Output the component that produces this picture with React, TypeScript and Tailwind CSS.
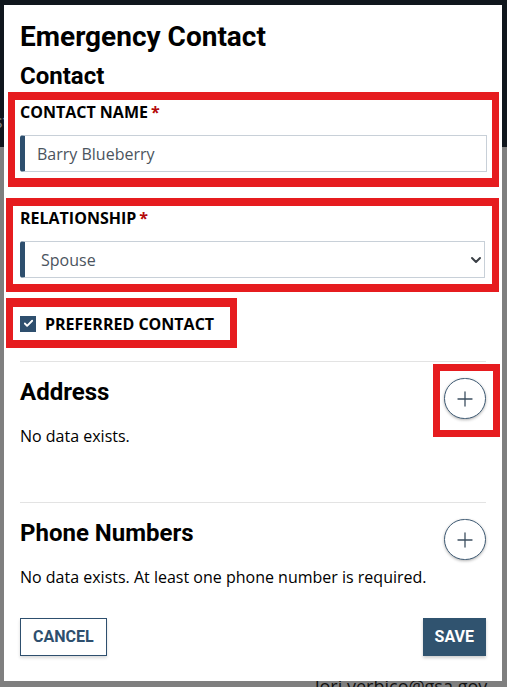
import { Check, ChevronDown, Plus } from 'lucide-react';

const heading = { fontFamily: 'Roboto, "Liberation Sans", sans-serif' };
const body = { fontFamily: '"Open Sans", "Liberation Sans", sans-serif' };

function Section({ title, text, marked, minH }: { title: string; text: string; marked?: boolean; minH: string }) {
  return (
    <div className={`border-t border-[#e3e3e3] ${minH}`}>
      <div className="flex items-start justify-between pt-[16px]">
        <h3 className="text-[24px] font-bold leading-[1.2] text-black" style={heading}>
          {title}
        </h3>
        <div className="relative">
          <button className="w-[42px] h-[41px] rounded-full border border-[#3f5b74] bg-white shadow-[0_1px_3px_rgba(0,0,0,0.3)] flex items-center justify-center text-[#3d4f60]">
            <Plus size={24} strokeWidth={1.3} />
          </button>
          {marked && (
            <div className="absolute -left-[11px] -top-[14px] w-[67px] h-[73px] border-[7px] border-[#e61c1f]" />
          )}
        </div>
      </div>
      <p className="text-[16px] text-black leading-[1.5] mt-[5px]" style={body}>
        {text}
      </p>
    </div>
  );
}

export default function App() {
  return (
    <div className="relative w-[507px] h-[687px] overflow-hidden bg-[#7f7f7f]">
      <div className="h-[147px] bg-[#10161d] pt-[108px] text-[18px] text-[#7b8086]" style={body}>
        <span className="-ml-[6px]">st</span>
      </div>
      <div className="pl-[315px] pt-[526px] text-[18px] text-[#111]" style={body}>
        lori.verbico@gsa.gov
      </div>

      <div className="absolute left-[4px] top-[5px] w-[498px] h-[676px] bg-white px-[16px] pt-[15px]">
        <h2 className="text-[28px] font-bold leading-[1.2] text-black" style={heading}>
          Emergency Contact
        </h2>
        <h3 className="text-[24px] font-bold leading-[1.2] text-black mt-[8px]" style={heading}>
          Contact
        </h3>

        <div className="-ml-[12px] -mr-[13px] mt-[2px] border-[7px] border-t-[8px] border-b-[9px] border-[#e61c1f] px-[5px] pb-[6px]">
          <label className="block text-[16px] font-bold leading-[1.5] text-black" style={body}>
            CONTACT NAME<span className="text-[#b50909] ml-[3px]">*</span>
          </label>
          <div className="mt-[11px] h-[37px] flex items-center border border-[#c8d0d8] border-l-[5px] border-l-[#2e4f6e] rounded-l-[3px] pl-[12px]">
            <span className="text-[16px] text-[#4b545e]" style={body}>
              Barry Blueberry
            </span>
          </div>
        </div>

        <div className="-ml-[14px] -mr-[13px] mt-[11px] border-[7px] border-t-[8px] border-b-[8px] border-[#e61c1f] px-[7px] pb-[6px]">
          <label className="block text-[16px] font-bold leading-[1.5] text-black" style={body}>
            RELATIONSHIP<span className="text-[#b50909] ml-[3px]">*</span>
          </label>
          <div className="mt-[11px] h-[37px] flex items-center justify-between border border-[#c8d0d8] border-l-[5px] border-l-[#2e4f6e] rounded-l-[3px] pl-[16px]">
            <span className="text-[16px] text-[#4b545e]" style={body}>
              Spouse
            </span>
            <ChevronDown size={16} strokeWidth={3} className="text-[#3a3f45]" />
          </div>
        </div>

        <div className="-ml-[14px] mt-[6px] w-[231px] border-[7px] border-t-[9px] border-b-[8px] border-[#e61c1f] pl-[7px] h-[50px] flex items-center gap-[9px]">
          <span className="w-[16px] h-[16px] bg-[#2e4f6e] flex items-center justify-center">
            <Check size={11} strokeWidth={4} className="text-white" />
          </span>
          <span className="text-[16px] font-bold text-black leading-none" style={body}>
            PREFERRED CONTACT
          </span>
        </div>

        <div className="mt-[13px]">
          <Section title="Address" text="No data exists." marked minH="h-[141px]" />
          <Section
            title="Phone Numbers"
            text="No data exists. At least one phone number is required."
            minH="h-[110px]"
          />
        </div>

        <div className="flex justify-between mt-[6px]">
          <button
            className="h-[38px] px-[12px] border-[1.5px] border-[#2e4f6e] text-[#2e4f6e] text-[16px] font-bold shadow-[0_2px_3px_rgba(0,0,0,0.15)]"
            style={heading}
          >
            CANCEL
          </button>
          <button
            className="h-[38px] px-[12px] bg-[#30536f] text-white text-[16px] font-bold shadow-[0_2px_3px_rgba(0,0,0,0.2)]"
            style={heading}
          >
            SAVE
          </button>
        </div>
      </div>
    </div>
  );
}
